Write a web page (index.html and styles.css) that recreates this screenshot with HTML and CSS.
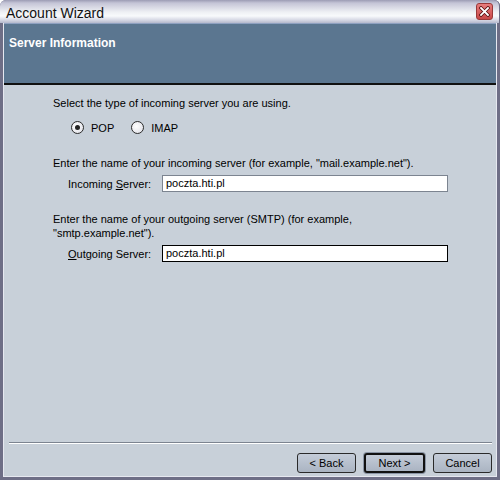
FILE: index.html
```html
<!DOCTYPE html>
<html lang="en">
<head>
    <meta charset="UTF-8">
    <title>Account Wizard</title>
    <link rel="stylesheet" href="styles.css">
</head>
<body>
    <div class="window">
        <div class="titlebar">
            <span class="title">Account Wizard</span>
            <span class="close">
                <svg width="11" height="11" viewBox="0 0 11 11">
                    <path d="M2 2 L9 9 M9 2 L2 9" stroke="#5a1010" stroke-width="3.4" stroke-linecap="square"/>
                    <path d="M2 2 L9 9 M9 2 L2 9" stroke="#fff" stroke-width="1.8" stroke-linecap="square"/>
                </svg>
            </span>
        </div>
        <div class="frame">
            <div class="page-header">Server Information</div>
            <div class="content">
                <p class="desc">Select the type of incoming server you are using.</p>
                <div class="radios">
                    <label class="radio"><span class="dot checked"></span>POP</label>
                    <label class="radio"><span class="dot"></span>IMAP</label>
                </div>

                <p class="desc gap">Enter the name of your incoming server (for example, "mail.example.net").</p>
                <div class="field">
                    <label class="field-label">Incoming <u>S</u>erver:</label>
                    <div class="input">poczta.hti.pl</div>
                </div>

                <p class="desc gap2">Enter the name of your outgoing server (SMTP) (for example,<br>"smtp.example.net").</p>
                <div class="field">
                    <label class="field-label"><u>O</u>utgoing Server:</label>
                    <div class="input focused">poczta.hti.pl</div>
                </div>
            </div>
            <div class="footer">
                <button class="btn">&lt; Back</button>
                <button class="btn default">Next &gt;</button>
                <button class="btn">Cancel</button>
            </div>
        </div>
    </div>
</body>
</html>
```

FILE: styles.css
```css
body {
    margin: 0;
    font-family: "Liberation Sans", Arial, sans-serif;
    font-size: 11px;
    color: #000;
    background: #fff;
}
.window {
    width: 500px;
    height: 480px;
    box-sizing: border-box;
    background: #6e6e86;
    border-radius: 6px 6px 0 0;
    padding: 0 3px 3px 3px;
    display: flex;
    flex-direction: column;
}
.titlebar {
    height: 23px;
    margin: 0 -3px;
    padding: 0 6px;
    border-radius: 6px 6px 0 0;
    background: linear-gradient(#9c9cb4 0, #c4c4d6 3px, #eef0f4 12px, #f8fafc 16px, #d6d8e4 20px, #b4b8cc 23px);
    display: flex;
    align-items: center;
    justify-content: space-between;
    border-right: 1px solid #6e6e86;
}
.title {
    font-family: "Liberation Sans", Arial, sans-serif;
    font-size: 14px;
    color: #111;
    padding-top: 2px;
}
.close {
    width: 15px;
    height: 15px;
    border-radius: 3px;
    background: linear-gradient(#e87c7c, #c84848);
    border: 1px solid #9a3838;
    display: flex;
    align-items: center;
    justify-content: center;
}
.frame {
    flex: 1;
    display: flex;
    flex-direction: column;
    background: #c8d0d9;
    border-left: 1px solid #e6e8f0;
    border-right: 1px solid #e6e8f0;
    border-bottom: 1px solid #e6e8f0;
}
.page-header {
    height: 62px;
    box-sizing: border-box;
    background: #5b7690;
    border-top: 1px solid #8ea0c0;
    border-bottom: 2px solid #101010;
    color: #fff;
    font-weight: bold;
    font-size: 12px;
    padding: 12px 0 0 5px;
}
.content {
    flex: 1;
    padding: 11px 0 0 49px;
}
.desc {
    margin: 0;
    line-height: 14px;
}
.desc.gap {
    margin-top: 22px;
}
.desc.gap2 {
    margin-top: 20px;
}
.radios {
    display: flex;
    gap: 17px;
    padding: 11px 0 0 18px;
}
.radio {
    display: flex;
    align-items: center;
    gap: 7px;
}
.dot {
    width: 11px;
    height: 11px;
    border-radius: 50%;
    border: 1px solid #2c2c2c;
    background: radial-gradient(circle at 40% 40%, #fff, #dcdce4);
    display: flex;
    align-items: center;
    justify-content: center;
}
.dot.checked::after {
    content: "";
    width: 5px;
    height: 5px;
    border-radius: 50%;
    background: #222;
}
.field {
    display: flex;
    align-items: center;
    padding: 5px 0 0 15px;
}
.field-label {
    width: 94px;
}
.input {
    width: 286px;
    height: 17px;
    box-sizing: border-box;
    background: #fff;
    border: 1px solid #7c8490;
    padding: 1px 3px;
    line-height: 13px;
}
.input.focused {
    border-color: #000;
}
.footer {
    height: 34px;
    margin: 0 4px 0 5px;
    border-top: 1px solid #7c8490;
    box-shadow: inset 0 1px 0 #fff;
    display: flex;
    justify-content: flex-end;
    align-items: flex-start;
    gap: 8px;
    padding-top: 10px;
    box-sizing: border-box;
}
.btn {
    font-family: "Liberation Sans", Arial, sans-serif;
    font-size: 11px;
    width: 59px;
    height: 20px;
    border: 1px solid #2a2a2a;
    border-radius: 3px;
    background: linear-gradient(#c4ccd8, #aab4c2);
    padding: 0;
    color: #000;
}
.btn.default {
    width: 61px;
    border: 2px solid #111;
    box-shadow: 0 0 0 1px #8a94a4;
}
```
